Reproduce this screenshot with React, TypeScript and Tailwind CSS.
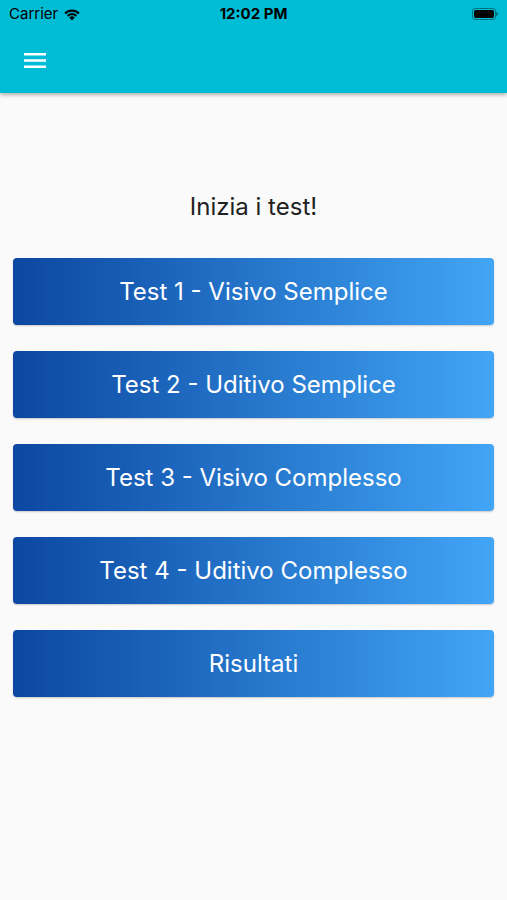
import React from "react";

const tests = [
  "Test 1 - Visivo Semplice",
  "Test 2 - Uditivo Semplice",
  "Test 3 - Visivo Complesso",
  "Test 4 - Uditivo Complesso",
  "Risultati",
];

function StatusBar() {
  return (
    <div className="h-[28px] flex items-center justify-between px-[9px] text-[15px] text-black">
      <div className="flex items-center gap-[5px] w-[120px]">
        <span>Carrier</span>
        <svg width="18" height="13" viewBox="0 0 18 13">
          <path d="M9 12.5 L6.3 9.6 A3.8 3.8 0 0 1 11.7 9.6 Z" fill="black" />
          <path d="M3.9 7.2 A7.3 7.3 0 0 1 14.1 7.2 L12.6 8.7 A5.2 5.2 0 0 0 5.4 8.7 Z" fill="black" />
          <path d="M1.4 4.7 A10.8 10.8 0 0 1 16.6 4.7 L15.1 6.2 A8.7 8.7 0 0 0 2.9 6.2 Z" fill="black" />
        </svg>
      </div>
      <span className="font-bold">12:02 PM</span>
      <div className="w-[120px] flex justify-end">
        <div className="flex items-center">
          <div className="w-[24px] h-[12px] rounded-[3px] border border-black/40 p-[1px]">
            <div className="w-full h-full bg-black rounded-[2px]" />
          </div>
          <div className="w-[1.5px] h-[4px] bg-black/40 rounded-r" />
        </div>
      </div>
    </div>
  );
}

export default function App() {
  return (
    <div className="w-[507px] h-[900px] bg-[#fafafa] flex flex-col font-['Inter','Liberation_Sans',sans-serif]">
      <div className="bg-[#00bcd4] h-[93px] shadow-[0_2px_4px_rgba(0,0,0,0.3)] flex flex-col relative z-10">
        <StatusBar />
        <div className="flex items-center px-[24px] h-[64px]">
          <svg width="22" height="17" viewBox="0 0 22 17">
            <rect x="0" y="1" width="22" height="2.5" fill="white" />
            <rect x="0" y="7.25" width="22" height="2.5" fill="white" />
            <rect x="0" y="13.5" width="22" height="2.5" fill="white" />
          </svg>
        </div>
      </div>
      <div className="flex flex-col items-center pt-[99px]">
        <h1 className="text-[24px] text-[#212121] leading-[30px]">Inizia i test!</h1>
        <div className="flex flex-col gap-[26px] mt-[36px] w-full px-[13px]">
          {tests.map((t) => (
            <button
              key={t}
              className="h-[67px] w-full rounded-[4px] bg-linear-to-r from-[#0d47a1] to-[#42a5f5] text-white text-[24px] shadow-[0_1px_2px_rgba(0,0,0,0.2)]"
            >
              {t}
            </button>
          ))}
        </div>
      </div>
    </div>
  );
}
